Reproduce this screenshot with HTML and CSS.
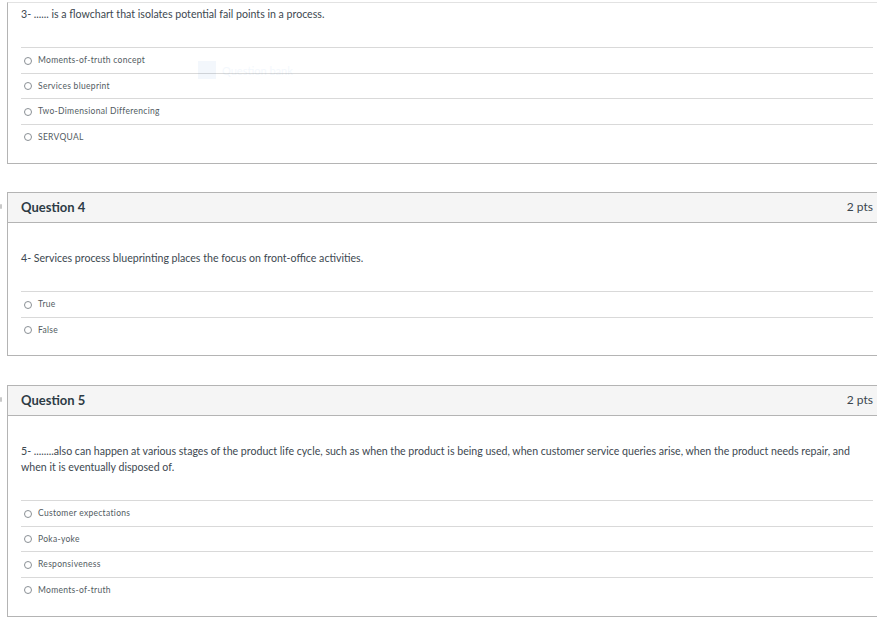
FILE: index.html
```html
<!DOCTYPE html>
<html>
<head>
<meta charset="utf-8">
<link rel="stylesheet" href="styles.css">
</head>
<body>
<div class="page">
  <div class="card card-cut">
    <div class="body">
      <p class="qtext">3- ...... is a flowchart that isolates potential fail points in a process.</p>
      <div class="answers">
        <div class="answer"><span class="radio"></span><span class="label">Moments-of-truth concept</span></div>
        <div class="answer"><span class="radio"></span><span class="label">Services blueprint</span></div>
        <div class="answer"><span class="radio"></span><span class="label">Two-Dimensional Differencing</span></div>
        <div class="answer"><span class="radio"></span><span class="label">SERVQUAL</span></div>
      </div>
    </div>
    <div class="ghost"><span class="ghost-icon"></span><span class="ghost-text">Question bank</span></div>
  </div>

  <div class="card">
    <span class="flag"></span>
    <div class="header"><span class="title">Question 4</span><span class="pts">2 pts</span></div>
    <div class="body">
      <p class="qtext">4- Services process blueprinting places the focus on front-office activities.</p>
      <div class="answers">
        <div class="answer"><span class="radio"></span><span class="label">True</span></div>
        <div class="answer"><span class="radio"></span><span class="label">False</span></div>
      </div>
    </div>
  </div>

  <div class="card card-last">
    <span class="flag"></span>
    <div class="header"><span class="title">Question 5</span><span class="pts">2 pts</span></div>
    <div class="body">
      <p class="qtext">5- ........also can happen at various stages of the product life cycle, such as when the product is being used, when customer service queries arise, when the product needs repair, and when it is eventually disposed of.</p>
      <div class="answers">
        <div class="answer"><span class="radio"></span><span class="label">Customer expectations</span></div>
        <div class="answer"><span class="radio"></span><span class="label">Poka-yoke</span></div>
        <div class="answer"><span class="radio"></span><span class="label">Responsiveness</span></div>
        <div class="answer"><span class="radio"></span><span class="label">Moments-of-truth</span></div>
      </div>
    </div>
  </div>
</div>
</body>
</html>
```

FILE: styles.css
```css
html, body {
  margin: 0;
  padding: 0;
  background: #ffffff;
  overflow: hidden;
}
body {
  font-family: Lato, "Open Sans", sans-serif;
  color: #2d3b45;
}
.page {
  width: 877px;
  height: 625px;
  overflow: hidden;
  padding-left: 7px;
  box-sizing: border-box;
}
.card {
  position: relative;
  width: 871px;
  box-sizing: border-box;
  border: 1px solid #b4b4b4;
  border-right: none;
  margin-top: 28px;
}
.card-cut {
  border-top: 1px solid #e2e2e2;
  margin-top: 2px;
}
.card-cut .body {
  padding-top: 3px;
  padding-bottom: 14px;
}
.card-last {
  margin-top: 29px;
}
.card-last .body {
  padding-bottom: 14px;
}
.flag {
  position: absolute;
  left: -8px;
  top: 11px;
  width: 2px;
  height: 5px;
  background: #c8c8c8;
  border-radius: 1px;
}
.header {
  display: flex;
  justify-content: space-between;
  align-items: center;
  height: 30px;
  background: #f5f5f5;
  border-bottom: 1px solid #b4b4b4;
  padding: 0 5px 2px 13px;
  box-sizing: border-box;
}
.title {
  font-weight: 700;
  font-size: 13px;
  color: #2d3b45;
}
.pts {
  font-size: 12px;
  color: #3a464e;
}
.body {
  padding: 27px 5px 13px 13px;
}
.qtext {
  margin: 0;
  font-size: 10.6px;
  line-height: 16px;
  color: #3d4850;
}
.answers {
  margin-top: 25px;
}
.answer {
  display: flex;
  align-items: center;
  box-sizing: border-box;
  height: 25.5px;
  border-top: 1px solid #d9d9d9;
  padding-left: 3px;
}
.radio {
  width: 6px;
  height: 6px;
  border: 1px solid #8a9095;
  border-radius: 50%;
  flex: none;
  margin-right: 6px;
  margin-top: 1px;
}
.label {
  font-size: 8.5px;
  letter-spacing: 0.3px;
  color: #525b62;
}
.ghost {
  position: absolute;
  left: 190px;
  top: 56px;
  width: 170px;
  height: 22px;
  display: flex;
  align-items: center;
  gap: 6px;
  opacity: 0.05;
}
.ghost-icon {
  width: 18px;
  height: 18px;
  background: #2a7bd6;
}
.ghost-text {
  font-size: 11px;
  color: #2a7bd6;
}
```
